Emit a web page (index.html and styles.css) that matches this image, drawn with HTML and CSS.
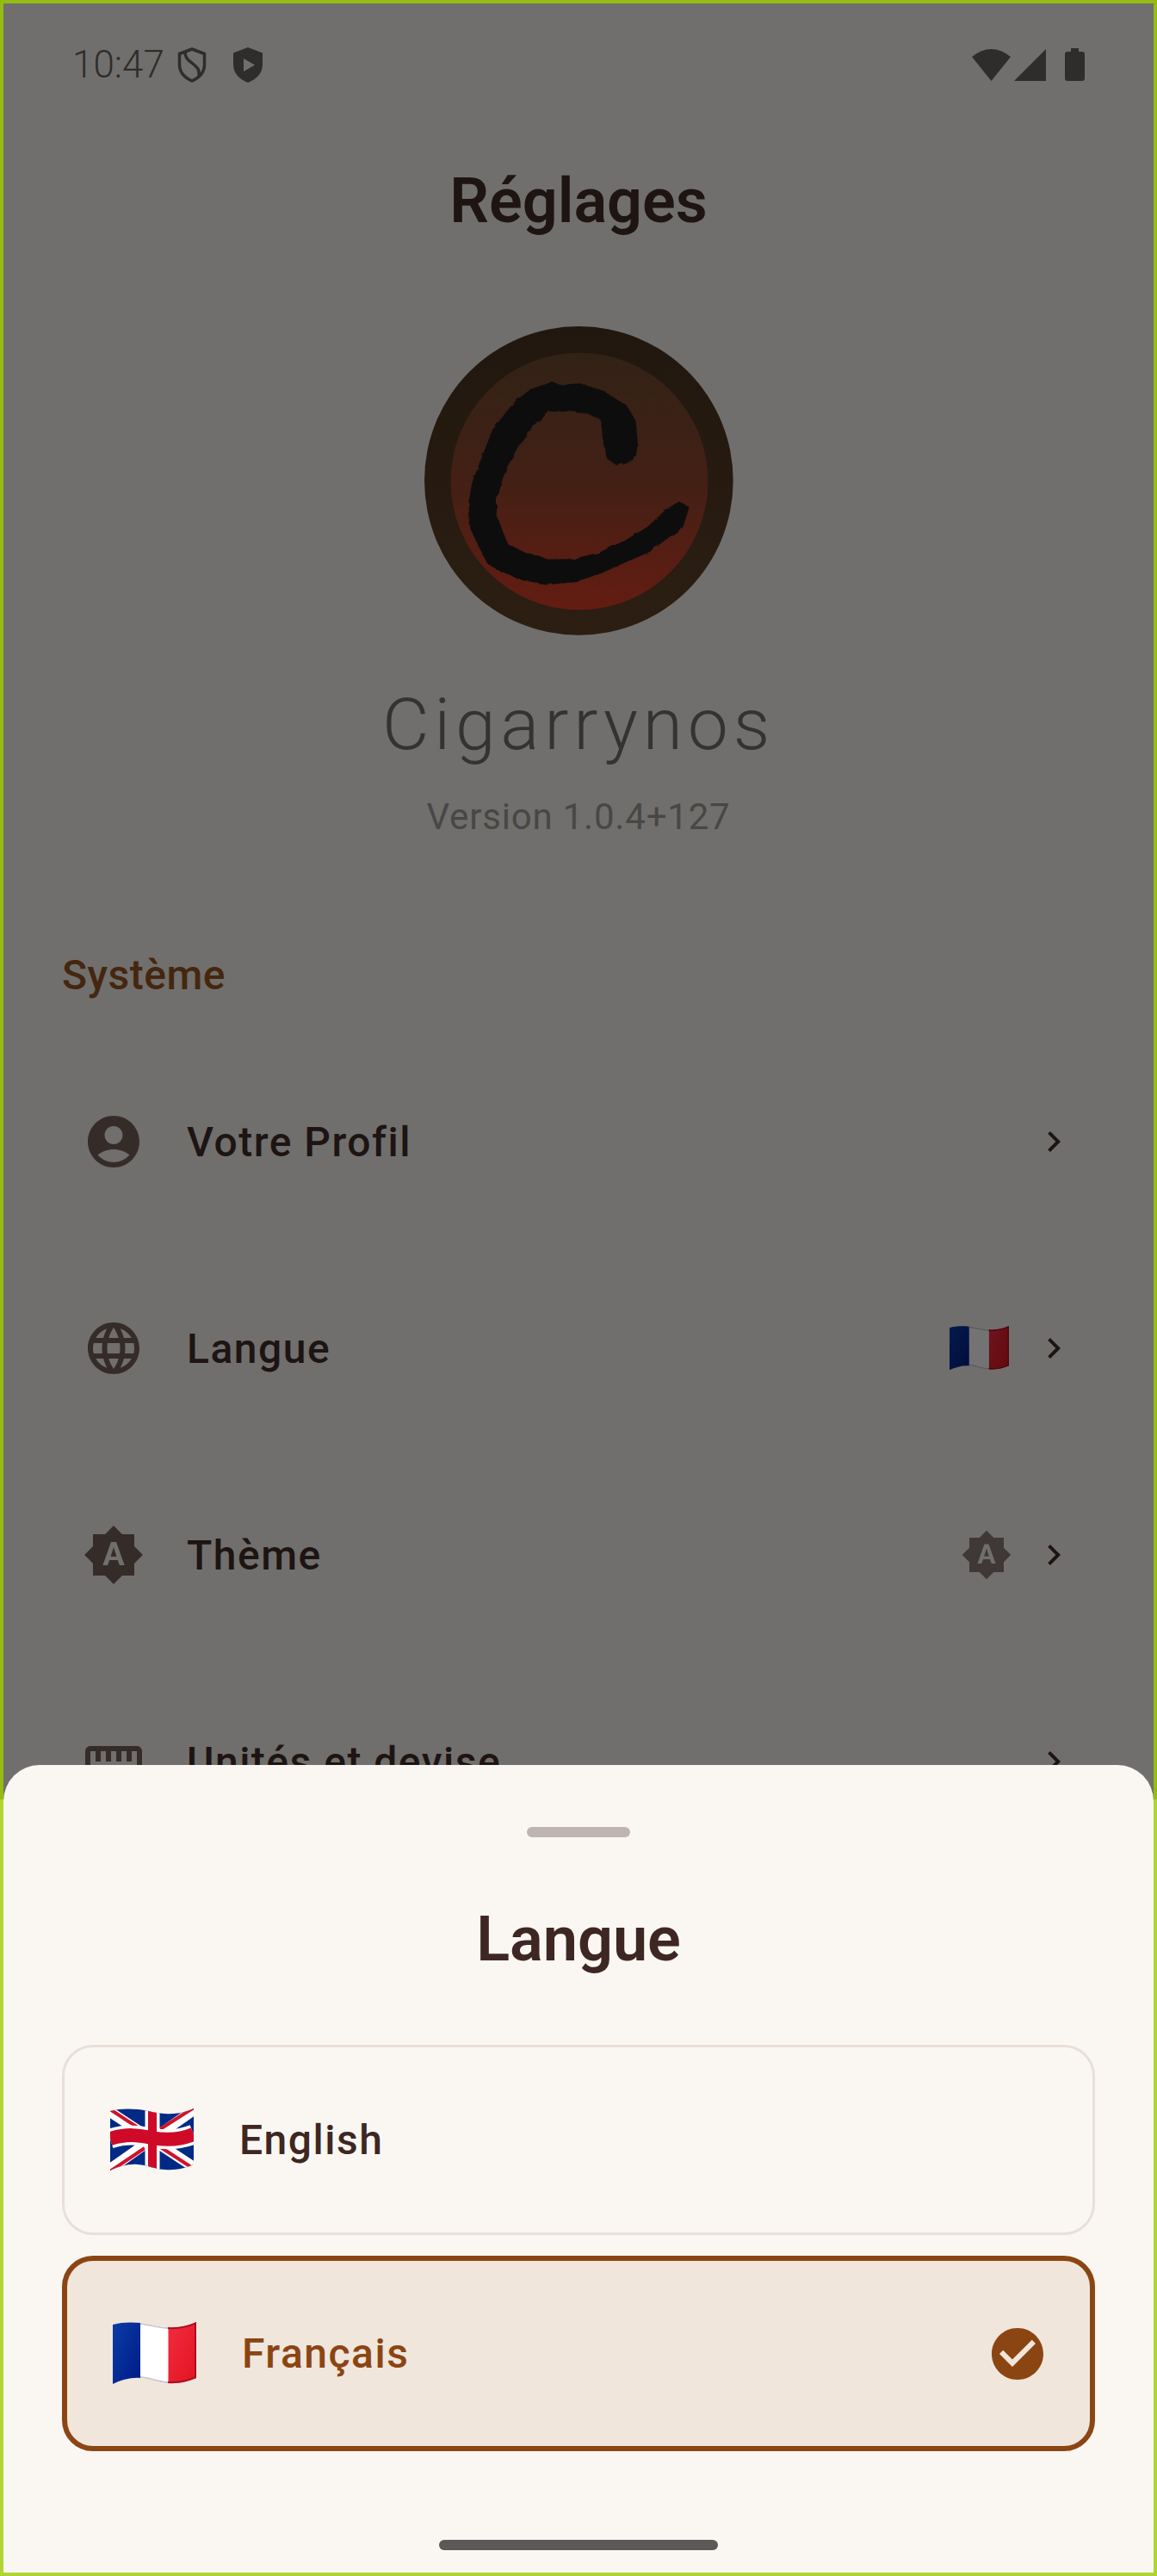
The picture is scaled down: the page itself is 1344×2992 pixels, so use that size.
FILE: index.html
```html
<!DOCTYPE html>
<html lang="fr">
<head>
    <meta charset="UTF-8">
    <meta name="viewport" content="width=device-width, initial-scale=1.0">
    <title>Réglages</title>
    <link rel="stylesheet" href="styles.css">
</head>
<body>
    <svg class="defs" width="0" height="0" aria-hidden="true">
        <defs>
            <clipPath id="flagShape">
                <path d="M0 3C10 0 22 0 32 1C44 2 54 6 64 6C76 7 88 4 97 0V65C88 69 76 72 64 71C54 71 44 66 32 65C22 64 10 67 0 72Z"/>
            </clipPath>
            <linearGradient id="frBlue" x1="0" y1="0" x2="1" y2="1">
                <stop offset="0" stop-color="#0a3ca6"/>
                <stop offset="1" stop-color="#001a85"/>
            </linearGradient>
            <linearGradient id="frRed" x1="0" y1="0" x2="1" y2="1">
                <stop offset="0" stop-color="#f12c40"/>
                <stop offset="1" stop-color="#e2131f"/>
            </linearGradient>
            <filter id="brushEdge" x="-5%" y="-5%" width="110%" height="110%">
                <feTurbulence type="fractalNoise" baseFrequency="0.04" numOctaves="2" seed="4"/>
                <feDisplacementMap in="SourceGraphic" scale="10"/>
            </filter>
            <symbol id="flagFr" viewBox="0 0 97 73">
                <g clip-path="url(#flagShape)">
                    <rect x="0" y="0" width="32.5" height="73" fill="url(#frBlue)"/>
                    <rect x="32" y="0" width="33" height="73" fill="#fff"/>
                    <rect x="64.5" y="0" width="33" height="73" fill="url(#frRed)"/>
                    <path d="M32 2C44 3 54 7 64 7M32 64C44 65 54 70 64 70" fill="none" stroke="#c9c9cc" stroke-width="2"/>
                    <path d="M64 7C76 8 88 5 97 1M64 70C76 71 88 68 97 64M96 0V66" fill="none" stroke="#a90f20" stroke-width="2"/>
                </g>
            </symbol>
            <symbol id="flagUk" viewBox="0 0 97 73">
                <g clip-path="url(#flagShape)">
                    <rect width="97" height="73" fill="#012a85"/>
                    <path d="M0 4L97 68M97 2L0 70" stroke="#fff" stroke-width="12" fill="none"/>
                    <path d="M0 1L44 30M97 -1L58 24M0 73L40 46M97 70L54 42" stroke="#cf142b" stroke-width="4" fill="none"/>
                    <path d="M0 35C20 29 32 31 48 34C64 37 80 37 97 30" stroke="#fff" stroke-width="23" fill="none"/>
                    <path d="M49 0V73" stroke="#fff" stroke-width="17" fill="none"/>
                    <path d="M0 35C20 29 32 31 48 34C64 37 80 37 97 30" stroke="#cf0a28" stroke-width="16" fill="none"/>
                    <path d="M49 0V73" stroke="#cf0a28" stroke-width="10" fill="none"/>
                </g>
            </symbol>
            <symbol id="iconAuto" viewBox="0 0 24 24">
                <path d="M10.85 12.65h2.3L12 9l-1.15 3.65zM20 8.69V4h-4.69L12 .69 8.69 4H4v4.69L.69 12 4 15.31V20h4.69L12 23.31 15.31 20H20v-4.69L23.31 12 20 8.69zM14.3 16l-.7-2h-3.2l-.7 2H7.8L11 7h2l3.2 9h-1.9z"/>
            </symbol>
            <symbol id="iconChevron" viewBox="0 0 24 24">
                <path d="M10 6L8.59 7.41 13.17 12l-4.58 4.59L10 18l6-6z"/>
            </symbol>
        </defs>
    </svg>

    <div class="frame">
        <div class="screen">
            <div class="status-bar">
                <div class="status-left">
                    <span class="status-time">10:47</span>
                    <svg class="status-shield" viewBox="0 0 34 41">
                        <path d="M17 2L31.5 7.5V20C31.500 29 26 35 17 39C8 35 2.500 29 2.500 20V7.500Z" fill="none" stroke="#2e2d2b" stroke-width="3.500" stroke-linejoin="round"/>
                        <path d="M9 5C9 13 13 15 18 19C23 23 26 25 25 33" fill="none" stroke="#2e2d2b" stroke-width="3.500"/>
                    </svg>
                    <svg class="status-shield status-shield-solid" viewBox="0 0 34 41">
                        <path fill-rule="evenodd" d="M17 0L34 6.500V20C34 30 27 37 17 41C7 37 0 30 0 20V6.500ZM12 13V28L25 20.500Z" fill="#2e2d2b"/>
                    </svg>
                </div>
                <div class="status-right">
                    <svg class="status-wifi" viewBox="0 0 45 37"><path d="M0 9Q22.500 -9 45 9L22.500 37Z" fill="#2e2d2b"/></svg>
                    <svg class="status-signal" viewBox="0 0 37 37"><path d="M0 37L37 0V37Z" fill="#2e2d2b"/></svg>
                    <svg class="status-battery" viewBox="0 0 23 38"><path d="M7 0H16V4H20Q23 4 23 7V35Q23 38 20 38H3Q0 38 0 35V7Q0 4 3 4H7Z" fill="#2e2d2b"/></svg>
                </div>
            </div>

            <h1 class="page-title">Réglages</h1>

            <div class="app-info">
                <svg class="app-logo" viewBox="0 0 1077 1077">
                    <defs>
                        <linearGradient id="logoRing" x1="0" y1="0" x2="0" y2="1">
                            <stop offset="0" stop-color="#21170e"/>
                            <stop offset="1" stop-color="#2c1e13"/>
                        </linearGradient>
                        <linearGradient id="logoFill" x1="0" y1="0" x2="0" y2="1">
                            <stop offset="0" stop-color="#322216"/>
                            <stop offset="0.5" stop-color="#432015"/>
                            <stop offset="1" stop-color="#641c12"/>
                        </linearGradient>
                    </defs>
                    <circle cx="538" cy="538" r="538" fill="url(#logoRing)"/>
                    <circle cx="540" cy="540" r="448" fill="url(#logoFill)"/>
                    <path transform="translate(-158 -88)" filter="url(#brushEdge)" fill="#0e0e0e" stroke="#0e0e0e" stroke-width="10" stroke-linejoin="round"
                        d="M600 288L640 296L700 292L780 318L860 368L890 420L898 510L880 550L830 568L798 545L785 490L778 412L730 388L665 380L590 380L570 400L530 432L510 470L480 505L440 580L425 620L415 660L405 690L405 745L425 800L445 850L510 882L590 905L680 903L770 880L860 838L940 790L1000 732L1045 704L1075 720L1055 785L1000 825L940 870L860 905L770 945L680 975L590 983L500 968L420 935L382 912L350 850L322 790L317 700L330 630L365 540L400 450L470 360L530 312Z"/>
                </svg>
                <div class="app-name">Cigarrynos</div>
                <div class="app-version">Version 1.0.4+127</div>
            </div>

            <div class="section-label">Système</div>

            <ul class="settings-list">
                <li class="settings-row">
                    <svg class="row-icon" viewBox="0 0 24 24"><path d="M12 2C6.48 2 2 6.48 2 12s4.48 10 10 10 10-4.48 10-10S17.52 2 12 2zm0 4c1.93 0 3.5 1.57 3.5 3.5S13.93 13 12 13s-3.5-1.57-3.5-3.5S10.07 6 12 6zm0 14c-2.03 0-4.43-.82-6.14-2.88C7.55 15.8 9.68 15 12 15s4.45.8 6.14 2.12C16.43 19.18 14.03 20 12 20z"/></svg>
                    <span class="row-label">Votre Profil</span>
                    <svg class="row-chevron"><use href="#iconChevron"/></svg>
                </li>
                <li class="settings-row">
                    <svg class="row-icon" viewBox="0 0 24 24"><path d="M11.99 2C6.47 2 2 6.48 2 12s4.47 10 9.99 10C17.52 22 22 17.52 22 12S17.52 2 11.99 2zm6.93 6h-2.95c-.32-1.25-.78-2.45-1.38-3.56 1.84.63 3.37 1.91 4.33 3.56zM12 4.040c.83 1.2 1.48 2.53 1.91 3.96h-3.82c.43-1.43 1.08-2.76 1.91-3.96zM4.260 14C4.100 13.36 4 12.69 4 12s.1-1.36.26-2h3.38c-.08.66-.14 1.32-.14 2s.06 1.34.14 2H4.260zm.82 2h2.95c.32 1.25.78 2.45 1.38 3.56-1.84-.63-3.37-1.9-4.33-3.56zm2.95-8H5.080c.96-1.66 2.49-2.93 4.33-3.56C8.810 5.550 8.350 6.750 8.030 8zM12 19.960c-.83-1.2-1.48-2.53-1.91-3.96h3.82c-.43 1.43-1.08 2.76-1.91 3.96zM14.340 14H9.660c-.09-.66-.16-1.32-.16-2s.07-1.35.16-2h4.680c.09.65.16 1.32.16 2s-.07 1.34-.16 2zm.25 5.560c.6-1.11 1.06-2.31 1.38-3.56h2.95c-.96 1.65-2.49 2.93-4.33 3.56zM16.360 14c.08-.66.14-1.32.14-2s-.06-1.34-.14-2h3.38c.16.64.26 1.31.26 2s-.1 1.36-.26 2h-3.38z"/></svg>
                    <span class="row-label">Langue</span>
                    <svg class="row-flag"><use href="#flagFr"/></svg>
                    <svg class="row-chevron"><use href="#iconChevron"/></svg>
                </li>
                <li class="settings-row">
                    <svg class="row-icon"><use href="#iconAuto"/></svg>
                    <span class="row-label">Thème</span>
                    <svg class="row-trailing-icon"><use href="#iconAuto"/></svg>
                    <svg class="row-chevron"><use href="#iconChevron"/></svg>
                </li>
                <li class="settings-row">
                    <svg class="row-icon" viewBox="0 0 24 24"><path d="M21 6H3c-1.100 0-2 .9-2 2v8c0 1.100.9 2 2 2h18c1.100 0 2-.9 2-2V8c0-1.100-.9-2-2-2zm0 10H3V8h2v4h2V8h2v4h2V8h2v4h2V8h2v4h2V8h2v8z"/></svg>
                    <span class="row-label">Unités et devise</span>
                    <svg class="row-chevron"><use href="#iconChevron"/></svg>
                </li>
            </ul>

            <div class="sheet">
                <div class="sheet-handle"></div>
                <h2 class="sheet-title">Langue</h2>
                <div class="lang-option">
                    <svg class="lang-flag"><use href="#flagUk"/></svg>
                    <span class="lang-name">English</span>
                </div>
                <div class="lang-option lang-option-selected">
                    <svg class="lang-flag"><use href="#flagFr"/></svg>
                    <span class="lang-name">Français</span>
                    <svg class="lang-check" viewBox="0 0 24 24"><path d="M12 2C6.48 2 2 6.48 2 12s4.48 10 10 10 10-4.48 10-10S17.52 2 12 2zm-2 15l-5-5 1.41-1.41L10 14.17l7.59-7.59L19 8l-9 9z"/></svg>
                </div>
                <div class="home-indicator"></div>
            </div>
        </div>
    </div>
</body>
</html>
```

FILE: styles.css
```css
* {
    box-sizing: border-box;
}
body {
    margin: 0;
    font-family: Roboto, "Noto Sans", sans-serif;
}
.defs {
    position: absolute;
}
.frame {
    width: 1344px;
    height: 2992px;
    padding: 4px;
    background: linear-gradient(#94bd12 2090px, #aed631 2090px);
}
.screen {
    position: relative;
    height: 2984px;
    overflow: hidden;
    background-color: #706f6d;
}

/* status bar */
.status-bar {
    height: 142px;
    display: flex;
    justify-content: space-between;
    align-items: center;
    padding: 0 80px 0 80px;
}
.status-left {
    display: flex;
    align-items: center;
}
.status-time {
    font-size: 44px;
    line-height: 42px;
    font-weight: 300;
    color: #2e2d2b;
}
.status-shield {
    width: 34px;
    height: 41px;
    margin-left: 15px;
}
.status-shield-solid {
    margin-left: 31px;
}
.status-right {
    display: flex;
    align-items: flex-end;
}
.status-wifi {
    width: 45px;
    height: 37px;
}
.status-signal {
    width: 37px;
    height: 37px;
    margin-left: 4px;
}
.status-battery {
    width: 23px;
    height: 38px;
    margin-left: 22px;
}

/* header */
.page-title {
    margin: 46px 0 0;
    font-size: 72px;
    line-height: 84px;
    font-weight: 600;
    text-align: center;
    color: #1e1412;
}
.app-info {
    display: flex;
    flex-direction: column;
    align-items: center;
}
.app-logo {
    width: 359px;
    height: 359px;
    margin-top: 103px;
}
.app-name {
    margin-top: 54px;
    font-size: 84px;
    line-height: 100px;
    font-weight: 300;
    letter-spacing: 5.8px;
    color: #353331;
}
.app-version {
    margin-top: 29px;
    font-size: 42px;
    line-height: 56px;
    letter-spacing: 0.8px;
    color: #484745;
}

/* settings list */
.section-label {
    margin: 128px 0 0 68px;
    font-size: 48px;
    line-height: 56px;
    font-weight: 500;
    letter-spacing: 0.5px;
    color: #45260e;
}
.settings-list {
    list-style: none;
    margin: 45px 0 0;
    padding: 0 92px;
}
.settings-row {
    height: 240px;
    display: flex;
    align-items: center;
    color: #352c2a;
    fill: currentColor;
}
.row-icon {
    width: 72px;
    height: 72px;
    flex-shrink: 0;
}
.row-label {
    flex: 1;
    margin-left: 49px;
    font-size: 48px;
    letter-spacing: 1.5px;
    font-weight: 500;
    color: #1e1412;
}
.row-chevron {
    width: 48px;
    height: 48px;
    fill: #1e1412;
}
.row-flag {
    width: 69px;
    height: 52px;
    margin-right: 28px;
    filter: brightness(0.45);
}
.row-trailing-icon {
    width: 60px;
    height: 60px;
    margin-right: 24px;
    fill: #3f3836;
}

/* language bottom sheet */
.sheet {
    position: absolute;
    left: 0;
    right: 0;
    bottom: 0;
    top: 2046px;
    padding: 72px 68px 0;
    background-color: #faf7f2;
    border-radius: 42px 42px 0 0;
}
.sheet-handle {
    width: 120px;
    height: 12px;
    margin: 0 auto;
    border-radius: 6px;
    background-color: #bfb5b0;
}
.sheet-title {
    margin: 77px 0 0;
    font-size: 72px;
    line-height: 84px;
    font-weight: 600;
    text-align: center;
    color: #3e2723;
}
.lang-option {
    height: 221px;
    margin-top: 80px;
    padding: 0 48px 0 53px;
    display: flex;
    align-items: center;
    border: 3px solid #e8e0d8;
    border-radius: 36px;
}
.lang-option-selected {
    height: 227px;
    margin-top: 24px;
    border: 6px solid #8b4513;
    background-color: #f0e6dc;
}
.lang-flag {
    width: 97px;
    height: 73px;
}
.lang-name {
    flex: 1;
    margin-left: 53px;
    font-size: 48px;
    font-weight: 500;
    letter-spacing: 1.5px;
    color: #3e2723;
}
.lang-option-selected .lang-name {
    color: #8b4513;
}
.lang-check {
    width: 72px;
    height: 72px;
    fill: #8b4513;
}
.home-indicator {
    width: 324px;
    height: 12px;
    margin: 103px auto 0;
    border-radius: 6px;
    background-color: #5b5957;
}
```
